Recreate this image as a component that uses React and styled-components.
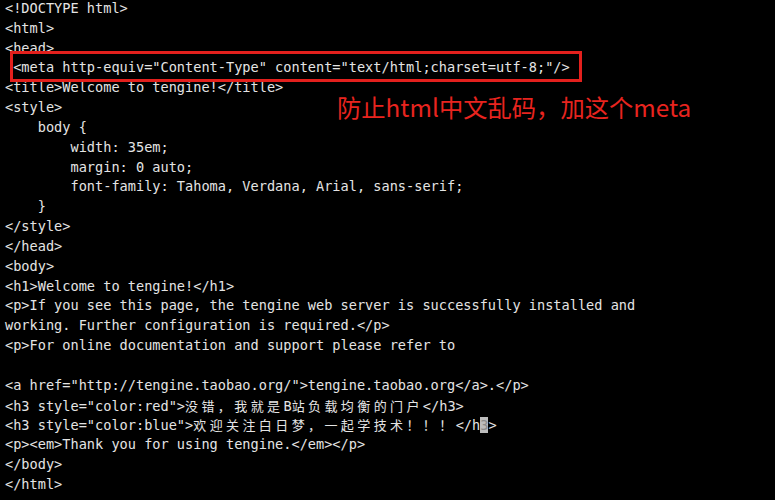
import React from "react";
import styled, { createGlobalStyle } from "styled-components";

const GlobalStyle = createGlobalStyle`
  html, body {
    margin: 0;
    padding: 0;
    background: #000;
  }
  body {
    width: 775px;
    height: 500px;
    overflow: hidden;
  }
`;

const lines = [
  "<!DOCTYPE html>",
  "<html>",
  "<head>",
  ' <meta http-equiv="Content-Type" content="text/html;charset=utf-8;"/>',
  "<title>Welcome to tengine!</title>",
  "<style>",
  "    body {",
  "        width: 35em;",
  "        margin: 0 auto;",
  "        font-family: Tahoma, Verdana, Arial, sans-serif;",
  "    }",
  "</style>",
  "</head>",
  "<body>",
  "<h1>Welcome to tengine!</h1>",
  "<p>If you see this page, the tengine web server is successfully installed and",
  "working. Further configuration is required.</p>",
  "<p>For online documentation and support please refer to",
  "",
  '<a href="http://tengine.taobao.org/">tengine.taobao.org</a>.</p>',
  '<h3 style="color:red">没错，我就是B站负载均衡的门户</h3>',
  "CURSOR",
  "<p><em>Thank you for using tengine.</em></p>",
  "</body>",
  "</html>",
];

function splitWide(text) {
  return text.split(/([\u3000-\u9fff\uff00-\uffef]+)/).filter((s) => s !== "");
}

function TermText({ text }) {
  return splitWide(text).map((part, i) =>
    /[\u3000-\u9fff\uff00-\uffef]/.test(part) ? (
      <Wide key={i}>{part}</Wide>
    ) : (
      <React.Fragment key={i}>{part}</React.Fragment>
    )
  );
}

function App() {
  return (
    <>
      <GlobalStyle />
      <Screen>
        <Terminal>
          {lines.map((v, i) => {
            if (v === "CURSOR") {
              return (
                <Line key={"line" + i}>
                  <TermText text={'<h3 style="color:blue">欢迎关注白日梦，一起学技术！！！</h'} />
                  <Cursor>3</Cursor>&gt;
                </Line>
              );
            }
            return (
              <Line key={"line" + i}>
                <TermText text={v} />
              </Line>
            );
          })}
        </Terminal>
        <MarkBox />
        <Note>防止html中文乱码，加这个meta</Note>
      </Screen>
    </>
  );
}

const Screen = styled.div`
  position: relative;
  width: 775px;
  height: 500px;
  background: #000;
  overflow: hidden;
`;

const Terminal = styled.div`
  margin-top: -1px;
  padding-left: 5px;
  font-family: "DejaVu Sans Mono", "Liberation Mono", "Noto Sans CJK SC", monospace;
  font-size: 13.6px;
  line-height: 19.83px;
  color: #e4e4e4;
  white-space: pre;
`;

const Line = styled.div`
  height: 19.83px;
`;

const Wide = styled.span`
  font-family: "Noto Sans CJK SC", sans-serif;
  font-size: 13px;
  letter-spacing: 3.4px;
`;

const Cursor = styled.span`
  background: #bcbcbc;
  color: #8a8a8a;
`;

const MarkBox = styled.div`
  position: absolute;
  left: 10px;
  top: 51px;
  width: 566px;
  height: 25px;
  border: 3px solid #e3201d;
`;

const Note = styled.div`
  position: absolute;
  left: 337px;
  top: 91px;
  font-family: "Noto Sans CJK SC", sans-serif;
  font-size: 24.3px;
  line-height: 32px;
  color: #e8241f;
  white-space: nowrap;
`;

export default App;
